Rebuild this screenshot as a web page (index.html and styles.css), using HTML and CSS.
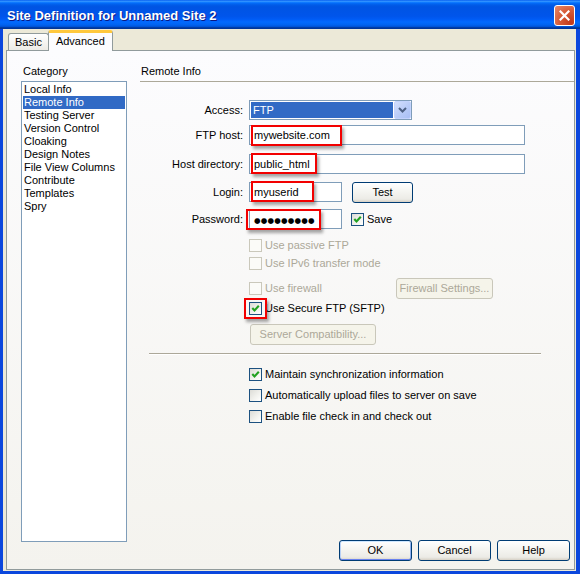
FILE: index.html
```html
<!DOCTYPE html>
<html>
<head>
<meta charset="utf-8">
<link rel="stylesheet" href="styles.css">
</head>
<body>
<div class="window">
  <div class="titlebar">
    <span class="title">Site Definition for Unnamed Site 2</span>
    <span class="close"><svg width="11" height="11" viewBox="0 0 11 11"><path d="M1.5 1.5 L9.5 9.5 M9.5 1.5 L1.5 9.5" stroke="#fff" stroke-width="2.2" stroke-linecap="square"/></svg></span>
  </div>
  <div class="frame">
    <div class="tabs">
      <div class="tab">Basic</div>
      <div class="tab active">Advanced</div>
    </div>
    <div class="panel">
      <div class="cat">
        <div class="lbl">Category</div>
        <ul class="list">
          <li>Local Info</li>
          <li class="sel">Remote Info</li>
          <li>Testing Server</li>
          <li>Version Control</li>
          <li>Cloaking</li>
          <li>Design Notes</li>
          <li>File View Columns</li>
          <li>Contribute</li>
          <li>Templates</li>
          <li>Spry</li>
        </ul>
      </div>
      <div class="main">
        <div class="head">Remote Info</div>
        <div class="form">
          <div class="flabel">Access:</div>
          <div class="select">
            <span class="sel-val">FTP</span>
            <span class="drop"><svg width="9" height="6" viewBox="0 0 9 6"><path d="M1 1 L4.5 4.5 L8 1" fill="none" stroke="#4D6185" stroke-width="2"/></svg></span>
          </div>

          <div class="flabel">FTP host:</div>
          <div class="field">
            <div class="input w-wide">mywebsite.com</div>
            <span class="mark m-host"></span>
          </div>

          <div class="flabel">Host directory:</div>
          <div class="field">
            <div class="input w-wide">public_html</div>
            <span class="mark m-dir"></span>
          </div>

          <div class="flabel">Login:</div>
          <div class="field frow">
            <div class="input w-short">myuserid</div>
            <div class="btn b-test">Test</div>
            <span class="mark m-login"></span>
          </div>

          <div class="flabel">Password:</div>
          <div class="field frow">
            <div class="input w-short"><span class="dots">●●●●●●●●●</span></div>
            <label class="check save"><span class="cb"><svg width="11" height="11" viewBox="0 0 11 11"><path d="M2.3 5 L4.5 7.4 L8.8 2.8" fill="none" stroke="#21A121" stroke-width="2.1"/></svg></span>Save</label>
            <span class="mark m-pass"></span>
          </div>

          <label class="check dis c2"><span class="cb off"></span>Use passive FTP</label>
          <label class="check dis c2"><span class="cb off"></span>Use IPv6 transfer mode</label>

          <div class="frow c2 fwrow">
            <label class="check dis fw"><span class="cb off"></span>Use firewall</label>
            <div class="btn dis b-fw">Firewall Settings...</div>
          </div>

          <div class="field c2 sftp">
            <label class="check"><span class="cb"><svg width="11" height="11" viewBox="0 0 11 11"><path d="M2.3 5 L4.5 7.4 L8.8 2.8" fill="none" stroke="#21A121" stroke-width="2.1"/></svg></span>Use Secure FTP (SFTP)</label>
            <span class="mark m-sftp"></span>
          </div>

          <div class="c2"><div class="btn dis b-compat">Server Compatibility...</div></div>
        </div>

        <div class="sep"></div>

        <div class="opts">
          <label class="check"><span class="cb"><svg width="11" height="11" viewBox="0 0 11 11"><path d="M2.3 5 L4.5 7.4 L8.8 2.8" fill="none" stroke="#21A121" stroke-width="2.1"/></svg></span>Maintain synchronization information</label>
          <label class="check"><span class="cb"></span>Automatically upload files to server on save</label>
          <label class="check"><span class="cb"></span>Enable file check in and check out</label>
        </div>

        <div class="footer">
          <div class="btn b-foot default">OK</div>
          <div class="btn b-foot">Cancel</div>
          <div class="btn b-foot">Help</div>
        </div>
      </div>
    </div>
  </div>
</div>
</body>
</html>
```
FILE: styles.css
```css
* { box-sizing: border-box; }

body {
  margin: 0;
  background: #ffffff;
  font: 11px/13px "Liberation Sans", Arial, sans-serif;
  color: #000;
}

.window {
  width: 580px;
  height: 574px;
  display: flex;
  flex-direction: column;
}

.titlebar {
  height: 29px;
  flex: none;
  display: flex;
  justify-content: space-between;
  align-items: flex-start;
  padding: 0 5px 0 7px;
  background: linear-gradient(to bottom, #0058ee 0%, #3593ff 4%, #288eff 6%, #127dff 8%, #036ffc 10%, #0262ee 14%, #0057e5 20%, #0054e3 24%, #0055eb 56%, #005bf5 66%, #026afe 76%, #0062ef 86%, #0052d6 92%, #0040ab 94%, #003092 100%);
}

.title {
  color: #fff;
  font-weight: bold;
  font-size: 13px;
  line-height: 16px;
  margin-top: 8px;
  text-shadow: 1px 1px 0 #0a1883;
}

.close {
  width: 21px;
  height: 21px;
  margin-top: 5px;
  border: 1px solid #fff;
  border-radius: 3px;
  background: radial-gradient(circle at 85% 85%, #c2391a 0%, #d75a36 50%, #e88a6c 100%);
  display: flex;
  align-items: center;
  justify-content: center;
}

.frame {
  flex: 1;
  display: flex;
  flex-direction: column;
  background: #ece9d8;
  border-style: solid;
  border-color: #0b47dd;
  border-width: 0 4px 3px 3px;
  padding: 0 1px 1px 3px;
  min-height: 0;
}

.tabs {
  height: 21px;
  flex: none;
  display: flex;
  align-items: flex-end;
  padding-left: 2px;
}

.tab {
  height: 17px;
  border: 1px solid #919b9c;
  border-bottom: none;
  border-radius: 3px 3px 0 0;
  padding: 0 6px;
  line-height: 16px;
  background: linear-gradient(#ffffff, #ecebe6);
}

.tab.active {
  height: 21px;
  margin-left: -1px;
  margin-bottom: -1px;
  position: relative;
  z-index: 1;
  border-top: 3px solid #ffc83c;
  padding: 0 7px;
  line-height: 16px;
  background: #fcfcfe;
}

.panel {
  flex: 1;
  min-height: 0;
  border: 1px solid #919b9c;
  background: linear-gradient(#fcfcfe, #f4f3ee);
  display: grid;
  grid-template-columns: 106px 1fr;
  column-gap: 13px;
  padding: 14px 0 8px 14px;
}

.cat {
  display: flex;
  flex-direction: column;
}

.lbl {
  padding-left: 2px;
  height: 13px;
}

.list {
  flex: 1;
  margin: 3px 0 19px;
  padding: 1px;
  border: 1px solid #7f9db9;
  background: #fff;
  list-style: none;
}

.list li {
  height: 13px;
  padding-left: 1px;
  white-space: nowrap;
}

.list li.sel {
  background: #316ac5;
  color: #fff;
}

.main {
  display: flex;
  flex-direction: column;
}

.head {
  height: 17px;
  padding-left: 1px;
  border-bottom: 1px solid #aca899;
}

.form {
  margin-top: 18px;
  display: grid;
  grid-template-columns: 103px 1fr;
  column-gap: 6px;
  grid-template-rows: 25px 29px 28px 27px 30px 18px 21px 20px 26px 21px;
  align-items: start;
}

.flabel {
  text-align: right;
  line-height: 20px;
  white-space: nowrap;
}

.c2 { grid-column: 2; }

.field { position: relative; }

.frow {
  display: flex;
  align-items: center;
  height: 20px;
}

.input {
  height: 20px;
  border: 1px solid #7f9db9;
  background: #fff;
  padding-left: 4px;
  line-height: 18px;
  white-space: nowrap;
  flex: none;
}

.w-wide { width: 276px; }
.w-short { width: 93px; }

.dots {
  font-family: "DejaVu Sans", sans-serif;
  font-size: 7.5px;
  letter-spacing: 0.2px;
}

.select {
  width: 163px;
  height: 20px;
  border: 1px solid #7f9db9;
  background: #fff;
  display: flex;
  padding: 0 0 0 1px;
}

.sel-val {
  flex: 1;
  height: 16px;
  margin: 1px 1px 1px 0;
  background: #316ac5;
  color: #fff;
  line-height: 16px;
  padding-left: 2px;
}

.drop {
  width: 17px;
  height: 18px;
  border: 1px solid #c3d3fd;
  border-radius: 2px;
  background: linear-gradient(135deg, #d2defc 0%, #b6caf7 60%, #a9bff5 100%);
  display: flex;
  align-items: center;
  justify-content: center;
}

.btn {
  height: 21px;
  border: 1px solid #003c74;
  border-radius: 3px;
  background: linear-gradient(#ffffff 0%, #f7f7f4 35%, #ecebe6 85%, #d6d0c5 100%);
  text-align: center;
  line-height: 19px;
  white-space: nowrap;
  flex: none;
}

.btn.dis {
  border-color: #c9c7ba;
  color: #aca899;
  background: #f5f4ea;
}

.btn.default {
  box-shadow: inset 0 1px 0 #cee7ff, inset 0 -1px 0 #6982ee, inset 1px 0 0 #b8d0f5, inset -1px 0 0 #8fb0ee;
}

.b-test { width: 61px; margin-left: 10px; }
.b-fw { width: 97px; }
.b-compat { width: 126px; margin-left: 1px; }
.b-foot { width: 73px; }

.check {
  display: flex;
  align-items: center;
  gap: 3px;
  height: 13px;
  white-space: nowrap;
}

.check.dis { color: #aca899; }

.save { margin-left: 9px; }

.fwrow { height: 21px; }
.fw { width: 147px; }

.sftp .check { height: 20px; }

.cb {
  width: 13px;
  height: 13px;
  flex: none;
  border: 1px solid #1c5180;
  background: linear-gradient(135deg, #dcdcd7 0%, #f3f3ef 60%, #ffffff 100%);
  display: flex;
}

.cb.off {
  border-color: #cac8bb;
  background: #fbfbf8;
}

.mark {
  position: absolute;
  height: 21px;
  border: 2px solid #f20000;
  box-shadow: 2px 3px 3px rgba(0, 0, 0, 0.35);
  pointer-events: none;
}

.m-host { left: 2px; top: 0; width: 91px; }
.m-dir { left: 2px; top: -1px; width: 66px; }
.m-login { left: 2px; top: -1px; width: 63px; }
.m-pass { left: -3px; top: 0; width: 75px; }
.m-sftp { left: -5px; top: 0; width: 23px; }

.sep {
  margin: 8px 0 0 9px;
  width: 392px;
  border-top: 1px solid #aca899;
  border-bottom: 1px solid #ffffff;
}

.opts {
  margin: 13px 0 0 109px;
  display: flex;
  flex-direction: column;
  gap: 8px;
}

.footer {
  margin-top: auto;
  display: flex;
  justify-content: flex-end;
  gap: 6px;
  padding-right: 4px;
}
```
